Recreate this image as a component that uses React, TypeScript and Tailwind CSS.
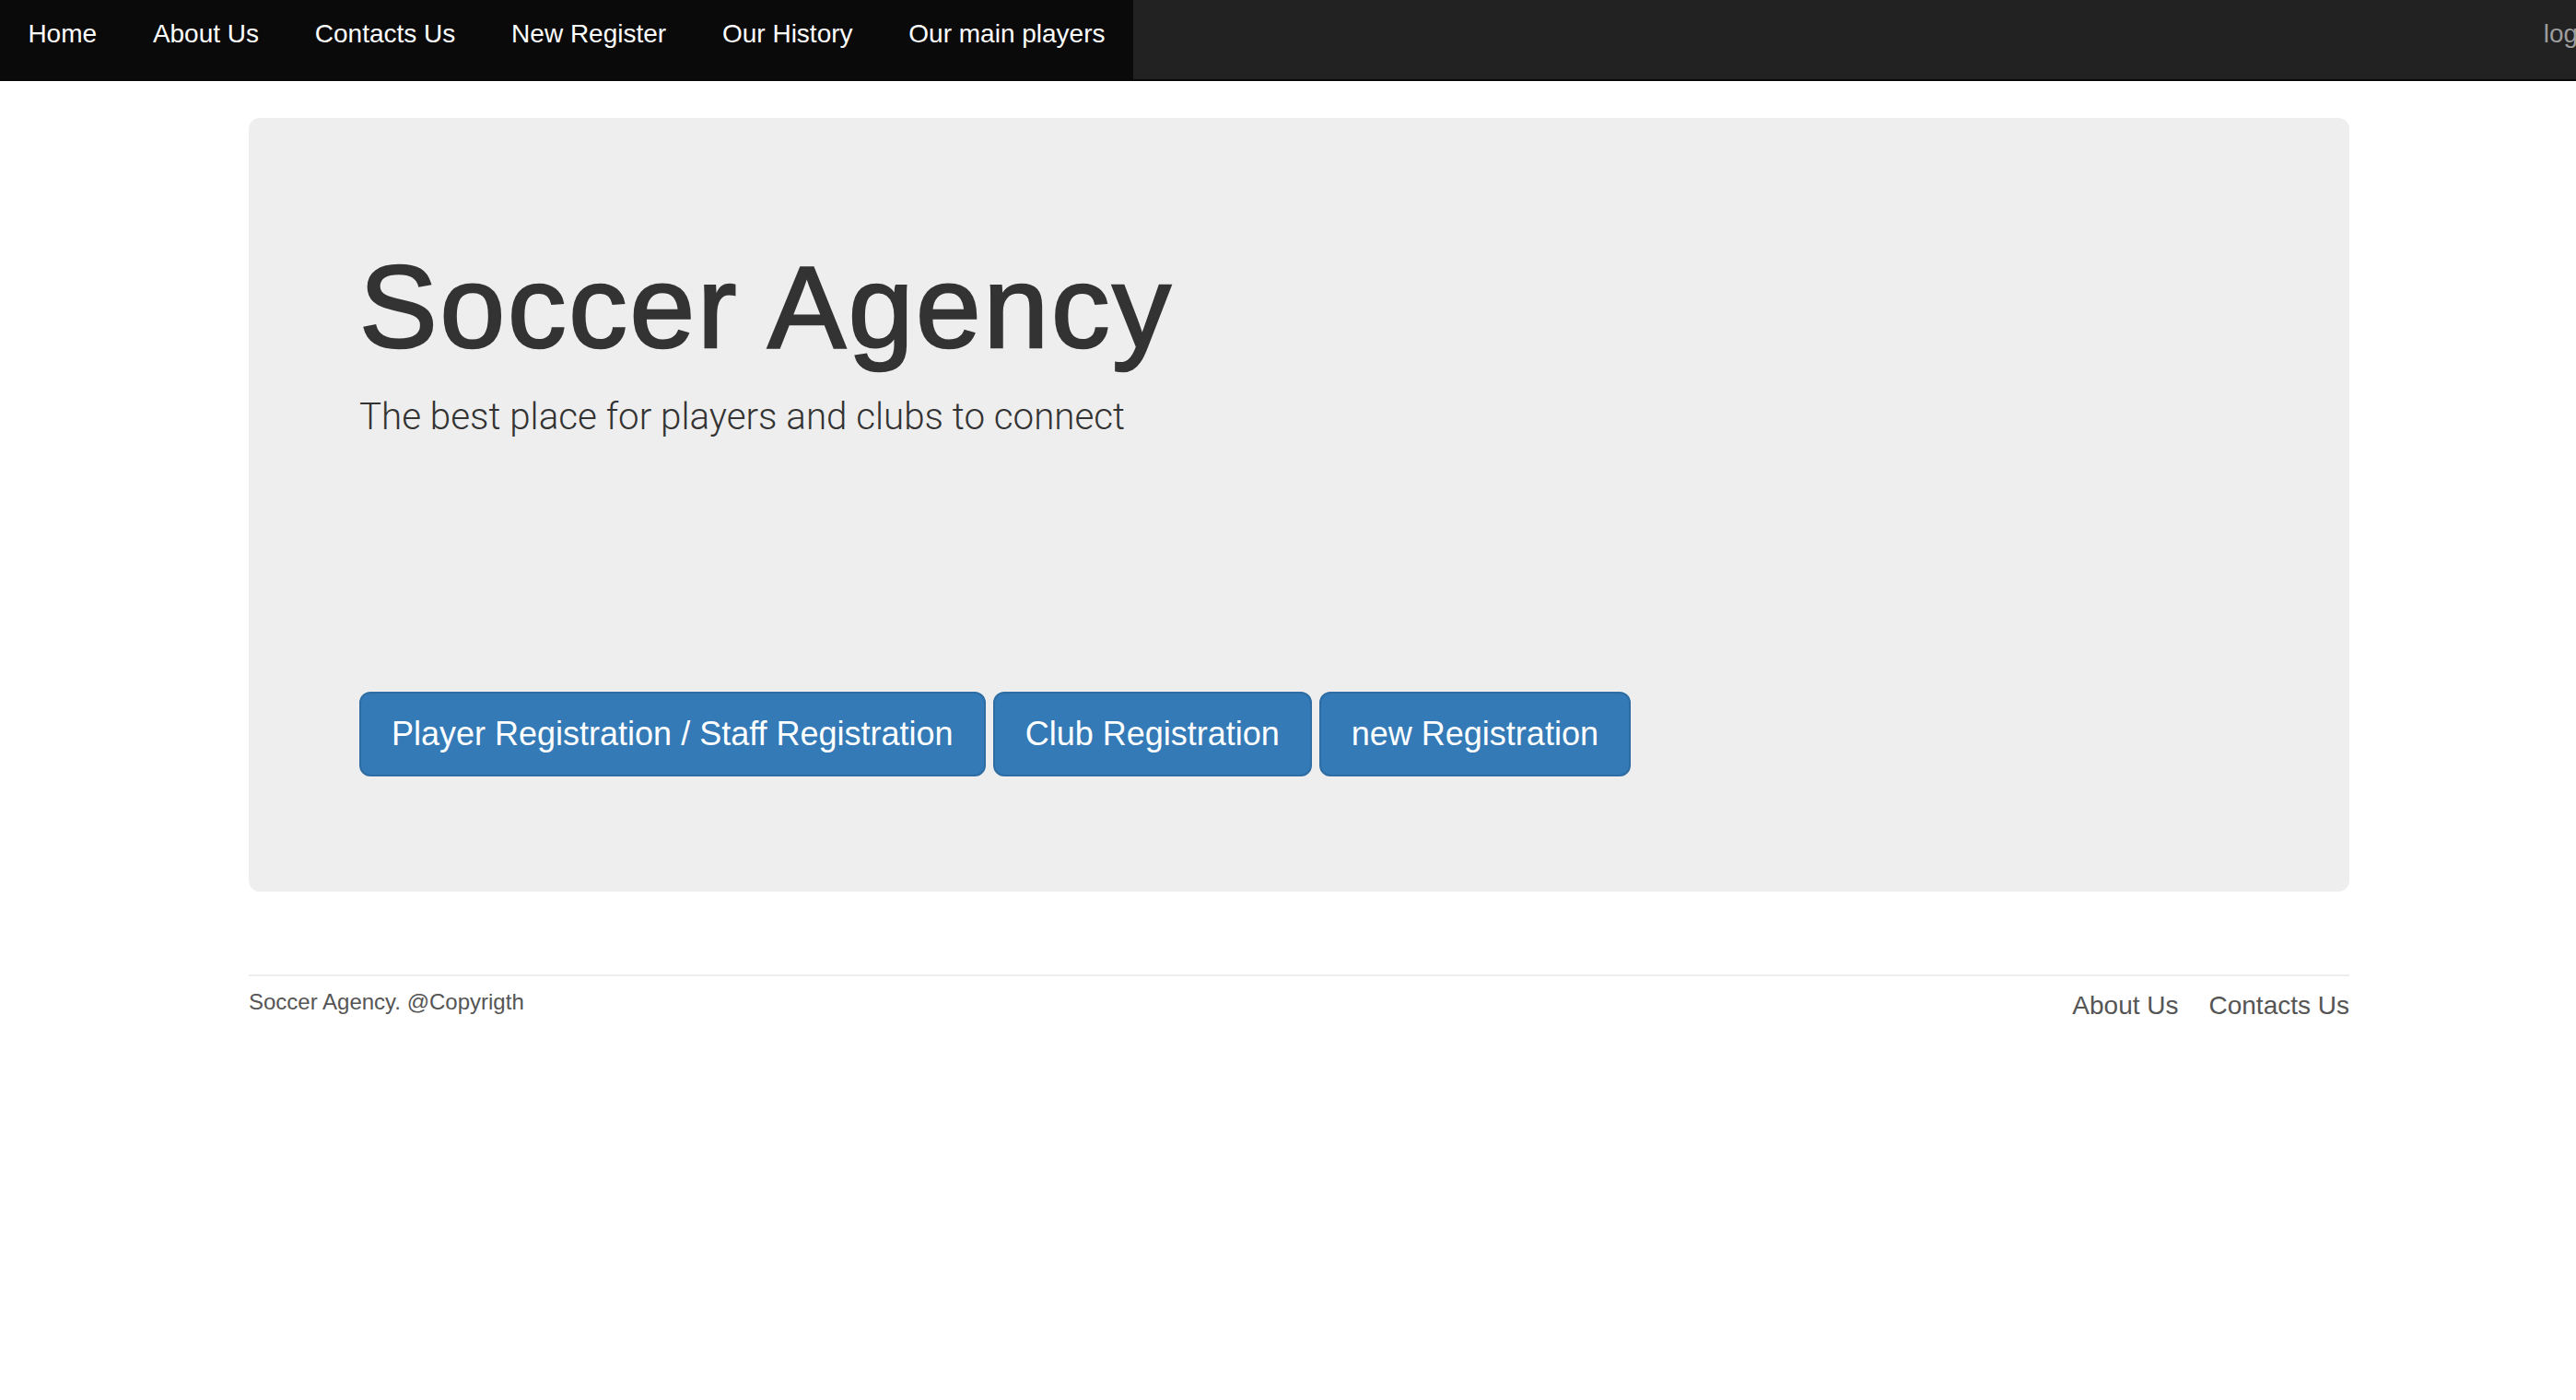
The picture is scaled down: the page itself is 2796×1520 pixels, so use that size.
import React from 'react';

const navLinks = ['Home', 'About Us', 'Contacts Us', 'New Register', 'Our History', 'Our main players'];

const actions = ['Player Registration / Staff Registration', 'Club Registration', 'new Registration'];

export default function App() {
  return (
    <div className="min-h-screen bg-white font-['Liberation_Sans',Arial,sans-serif] text-[#333]">
      {/* top bar */}
      <nav className="flex h-[88px] overflow-hidden border-b-2 border-[#080808] bg-[#222]">
        <ul className="-mb-[2px] flex h-[88px] bg-[#0a0a0a]">
          {navLinks.map((link) => (
            <li key={link}>
              <a href="#" className="block px-[30.4px] pt-[17px] text-[28px] leading-[40px] text-white">
                {link}
              </a>
            </li>
          ))}
        </ul>
        <a href="#" className="ml-auto mr-[-24px] shrink-0 pt-[17px] text-[28px] leading-[40px] text-[#9d9d9d]">
          login
        </a>
      </nav>

      <div className="ml-[270px] w-[2280px]">
        {/* jumbotron */}
        <section className="mt-[40px] rounded-[12px] bg-[#eee] px-[120px] pb-[125px] pt-[96px]">
          <h1 className="mt-[40px] mb-[20px] text-[127px] leading-[139px] font-normal tracking-[2.8px] text-[#333] [-webkit-text-stroke:2.5px_#333]">
            Soccer Agency
          </h1>
          <p className="font-['Roboto',sans-serif] text-[40.3px] font-light leading-[60px] text-[#333]">
            The best place for players and clubs to connect
          </p>
          <div className="mt-[268px] flex gap-[8px]">
            {actions.map((label) => (
              <button
                key={label}
                className="rounded-[12px] border-2 border-[#2e6da4] bg-[#337ab7] px-[33px] py-[20px] text-[36px] leading-[48px] text-white"
              >
                {label}
              </button>
            ))}
          </div>
        </section>

        {/* footer */}
        <footer className="mt-[90px] border-t-2 border-[#eee] pt-[12px] text-[#555]">
          <div className="flex items-start justify-between">
            <p className="text-[24px] leading-[32px]">Soccer Agency. @Copyrigth</p>
            <div className="flex gap-[33px] pt-[2px] text-[28px] leading-[36px]">
              <a href="#">About Us</a>
              <a href="#">Contacts Us</a>
            </div>
          </div>
        </footer>
      </div>
    </div>
  );
}
